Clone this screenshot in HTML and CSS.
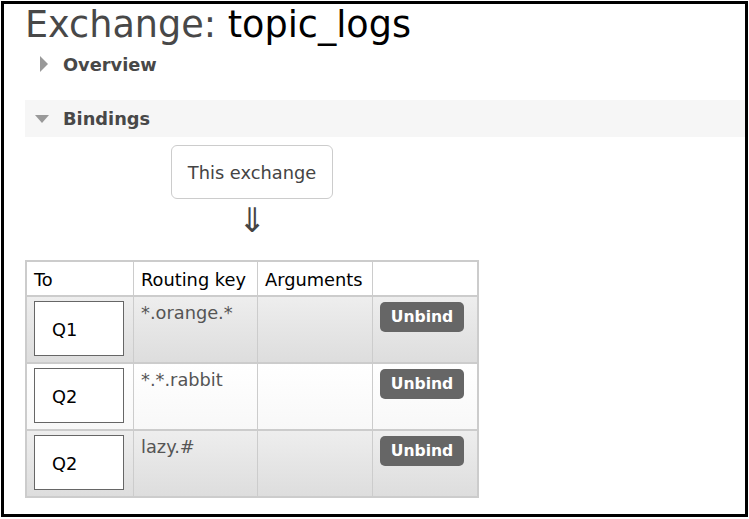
FILE: index.html
```html
<!DOCTYPE html>
<html>
<head>
<meta charset="utf-8">
<link rel="stylesheet" href="styles.css">
</head>
<body>
<div class="frame">
  <h1 class="title"><span class="kind">Exchange:</span> <span class="name">topic_logs</span></h1>
  <div class="section closed">
    <div class="section-head"><span class="tri-right"></span><span class="section-title">Overview</span></div>
  </div>
  <div class="section open">
    <div class="section-head bar"><span class="tri-down"></span><span class="section-title">Bindings</span></div>
    <div class="flow">
      <div class="this-ex">This exchange</div>
      <div class="arrow">⇓</div>
    </div>
    <table class="bindings">
      <thead>
        <tr><th class="c-to">To</th><th class="c-key">Routing key</th><th class="c-args">Arguments</th><th class="c-act"></th></tr>
      </thead>
      <tbody>
        <tr class="alt1">
          <td class="dest"><div class="queue">Q1</div></td>
          <td class="key">*.orange.*</td>
          <td></td>
          <td class="act"><button class="unbind">Unbind</button></td>
        </tr>
        <tr class="alt2">
          <td class="dest"><div class="queue">Q2</div></td>
          <td class="key">*.*.rabbit</td>
          <td></td>
          <td class="act"><button class="unbind">Unbind</button></td>
        </tr>
        <tr class="alt1">
          <td class="dest"><div class="queue">Q2</div></td>
          <td class="key">lazy.#</td>
          <td></td>
          <td class="act"><button class="unbind">Unbind</button></td>
        </tr>
      </tbody>
    </table>
  </div>
</div>
</body>
</html>
```
FILE: styles.css
```css
html, body { margin: 0; padding: 0; background: #fff; }
body { font-family: "DejaVu Sans", Verdana, sans-serif; color: #444; }
.frame {
  margin: 1px 0 0 1px;
  width: 720px;
  height: 510px;
  border: 3px solid #000;
  padding-left: 21px;
  overflow: hidden;
}
.title {
  margin: 0;
  font-weight: normal;
  font-size: 36.6px;
  line-height: 42px;
  color: #484848;
}
.title .name { color: #000; }
.section-head {
  display: flex;
  align-items: center;
  height: 37px;
}
.closed .section-head { height: 36px; }
.closed { margin-bottom: 18px; }
.bar { background: #f6f6f6; }
.section-title {
  font-weight: bold;
  font-size: 17.8px;
  color: #484848;
}
.tri-right {
  width: 0; height: 0;
  margin-left: 15px;
  margin-right: 15px;
  border-top: 8px solid transparent;
  border-bottom: 8px solid transparent;
  border-left: 8px solid #999;
}
.tri-down {
  width: 0; height: 0;
  margin-left: 10px;
  margin-right: 14px;
  border-left: 7px solid transparent;
  border-right: 7px solid transparent;
  border-top: 8px solid #999;
}
.flow {
  display: flex;
  flex-direction: column;
  align-items: center;
  width: 454px;
  padding-top: 8px;
}
.this-ex {
  border: 1px solid #ccc;
  border-radius: 6px;
  padding: 0 16px;
  height: 52px;
  line-height: 53px;
  font-size: 17.8px;
  color: #444;
}
.arrow {
  font-size: 34px;
  line-height: 42px;
  color: #444;
  margin-bottom: 19px;
}
.bindings {
  border-collapse: collapse;
  border: 2px solid #ccc;
  font-size: 17.8px;
}
.bindings th {
  font-weight: normal;
  color: #000;
  text-align: left;
  height: 31px;
  padding: 2px 7px 0;
  border-right: 1px solid #ccc;
  border-bottom: 2px solid #ccc;
  background: #fff;
  white-space: nowrap;
}
.bindings td {
  vertical-align: top;
  border-right: 1px solid #ccc;
  border-bottom: 2px solid #ccc;
  padding: 4px 7px 0;
  height: 60px;
}
.c-to { width: 92px; }
.c-key { width: 109px; }
.c-args { width: 100px; }
.c-act { width: 90px; }
.alt1 { background: linear-gradient(#eee, #ddd); }
.alt2 { background: linear-gradient(#fff, #f8f8f8); }
.bindings td.dest { padding-left: 7px; padding-right: 6px; }
.queue {
  width: 71px;
  height: 53px;
  border: 1px solid #666;
  background: #fff;
  padding-left: 17px;
  line-height: 56px;
  color: #000;
}
.key { color: #555; }
.bindings td.key { padding-top: 5px; }
.bindings td.act { padding-top: 5px; }
.unbind {
  font-family: inherit;
  font-size: 15.6px;
  font-weight: bold;
  background: #666;
  color: #fff;
  border: 0;
  border-radius: 5px;
  width: 84px;
  height: 30px;
  padding: 0;
}
```
